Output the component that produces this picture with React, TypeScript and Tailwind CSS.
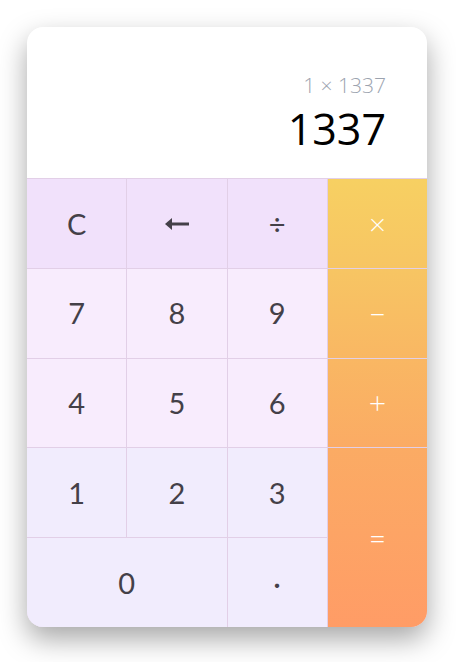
export default function App() {
  const key = "flex items-center justify-center text-[29px] text-[#444048]";
  const op = "flex items-center justify-center text-[30px] font-light text-white";

  return (
    <div className="min-h-screen bg-white pt-[27px] pl-[27px]" style={{ fontFamily: "Lato, 'Noto Sans', sans-serif" }}>
      <div className="w-[400px] h-[600px] rounded-2xl overflow-hidden bg-white shadow-[0_12px_28px_rgba(0,0,0,0.35)] flex flex-col">
        {/* display */}
        <div className="h-[152px] flex flex-col items-end justify-end pr-[41px] pb-[28px] border-b border-[#e2cfe7]" style={{ fontFamily: "'Open Sans', sans-serif" }}>
          <div className="text-[21px] font-light text-[#9ca3af] leading-none">1 × 1337</div>
          <div className="text-[43px] text-black leading-none mt-[11px]">1337</div>
        </div>

        {/* keypad */}
        <div className="flex-1 grid grid-cols-4 grid-rows-5 gap-px bg-[#e2cfe7]">
          <div className={`${key} bg-[#f1e1fb]`}>C</div>
          <div className={`${key} bg-[#f1e1fb]`}>
            <svg width="24" height="12" viewBox="0 0 24 12" className="mt-[1px]" aria-label="backspace">
              <polygon points="0,6 7,0 7,12" fill="#444048" />
              <rect x="6" y="4.5" width="18" height="3" fill="#444048" />
            </svg>
          </div>
          <div className={`${key} bg-[#f1e1fb]`}>÷</div>
          <div className={`${op} bg-linear-to-b from-[#f7d062] to-[#f7c563]`}>×</div>

          <div className={`${key} bg-[#f8ecfd]`}>7</div>
          <div className={`${key} bg-[#f8ecfd]`}>8</div>
          <div className={`${key} bg-[#f8ecfd]`}>9</div>
          <div className={`${op} bg-linear-to-b from-[#f7c563] to-[#f9b763]`}>−</div>

          <div className={`${key} bg-[#f8ecfd]`}>4</div>
          <div className={`${key} bg-[#f8ecfd]`}>5</div>
          <div className={`${key} bg-[#f8ecfd]`}>6</div>
          <div className={`${op} bg-linear-to-b from-[#f9b763] to-[#fbab64]`}>+</div>

          <div className={`${key} bg-[#f1ecfd]`}>1</div>
          <div className={`${key} bg-[#f1ecfd]`}>2</div>
          <div className={`${key} bg-[#f1ecfd]`}>3</div>
          <div className={`${op} row-span-2 bg-linear-to-b from-[#fbab64] to-[#ff9c66]`}>=</div>

          <div className={`${key} col-span-2 bg-[#f1ecfd]`}>0</div>
          <div className={`${key} bg-[#f1ecfd]`}>·</div>
        </div>
      </div>
    </div>
  );
}
